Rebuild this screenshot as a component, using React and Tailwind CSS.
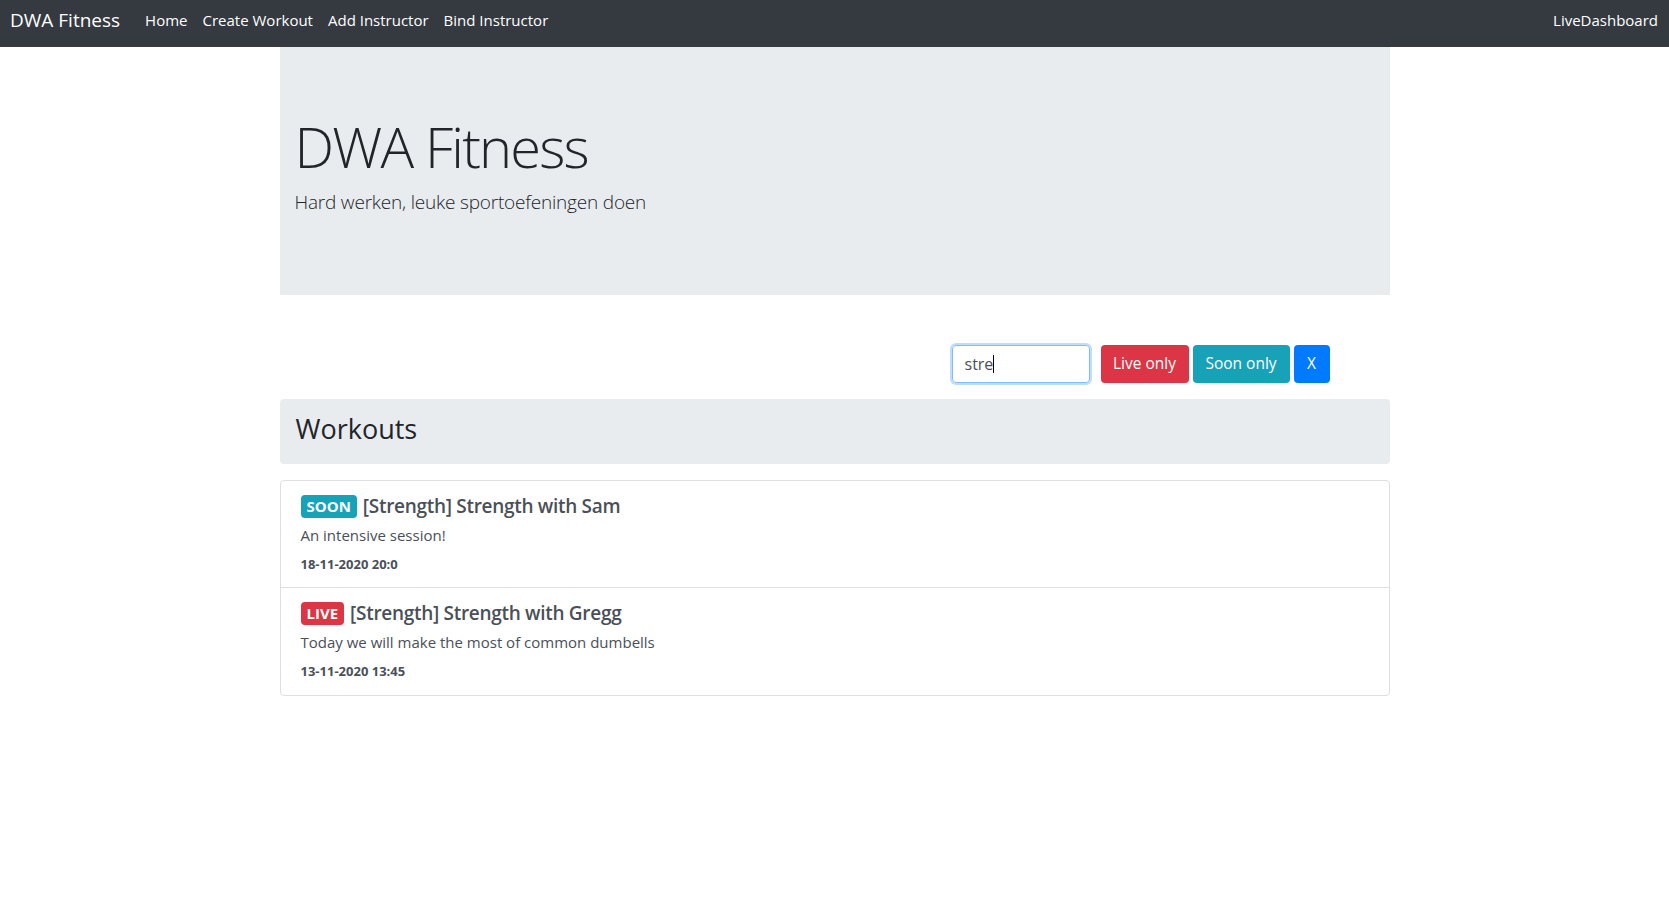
import React from "react";

function Item({ badge, badgeColor, title, desc, date }) {
  return (
    <div className="px-[20px] pt-[14px] pb-[12px] h-[107px] border-b border-[#dfdfdf] last:border-b-0">
      <div className="flex items-center h-[24px] mb-[4px]">
        <span
          className={`${badgeColor} text-white font-bold text-[15px] leading-none px-[6px] py-[4px] rounded-[4px] mr-[6px]`}
        >
          {badge}
        </span>
        <span className="text-[19px] font-semibold tracking-[-0.3px] leading-[1.2] text-[#495057]">{title}</span>
      </div>
      <p className="text-[15px] leading-[24px] text-[#495057] mb-[5px]">{desc}</p>
      <p className="text-[13px] font-bold leading-[24px] text-[#495057]">{date}</p>
    </div>
  );
}

export default function App() {
  return (
    <div className="min-h-screen bg-white font-['Open_Sans',sans-serif] text-[#212529]">
      <nav className="h-[47px] bg-[#343a40] flex items-start pt-[6px] pl-[10px] pr-[11px] text-white">
        <span className="text-[19px] leading-[28px] mr-[25px]">DWA Fitness</span>
        <div className="flex items-center gap-[15px] text-[15px] leading-[28px]">
          <span>Home</span>
          <span>Create Workout</span>
          <span>Add Instructor</span>
          <span>Bind Instructor</span>
        </div>
        <span className="ml-auto text-[15px] leading-[28px]">LiveDashboard</span>
      </nav>

      <div className="w-[1110px] mx-auto">
        <div className="bg-[#e9ecef] pt-[66px] pb-[62px] px-[15px]">
          <h1 className="text-[56px] font-light tracking-[-1.8px] leading-[1.2] mb-[8px] text-[#212529]">
            DWA Fitness
          </h1>
          <p className="text-[19px] font-light tracking-[-0.2px] leading-[1.5] mb-[16px] text-[#212529]">
            Hard werken, leuke sportoefeningen doen
          </p>
        </div>

        <div className="mt-[50px] flex justify-end items-center pr-[60px] h-[38px]">
          <div className="w-[138px] h-[38px] border border-[#80bdff] rounded-[4px] shadow-[0_0_0_2px_rgba(0,123,255,0.25)] flex items-center px-[12px] text-[16px] text-[#495057] mr-[11px]">
            <span>stre</span>
            <span className="inline-block w-[1px] h-[18px] bg-black"></span>
          </div>
          <button className="h-[38px] w-[88px] bg-[#dc3545] text-white text-[15.5px] rounded-[4px] mr-[4px]">
            Live only
          </button>
          <button className="h-[38px] w-[97px] bg-[#17a2b8] text-white text-[15.5px] rounded-[4px] mr-[4px]">
            Soon only
          </button>
          <button className="h-[38px] w-[36px] bg-[#007bff] text-white text-[15.5px] rounded-[4px]">X</button>
        </div>

        <div className="mt-[16px] h-[65px] bg-[#e9ecef] rounded-[4px] px-[16px] pt-[14px]">
          <h3 className="text-[27px] font-normal leading-[1.2] text-[#212529]">Workouts</h3>
        </div>

        <div className="mt-[16px] border border-[#dfdfdf] rounded-[4px]">
          <Item
            badge="SOON"
            badgeColor="bg-[#17a2b8]"
            title="[Strength] Strength with Sam"
            desc="An intensive session!"
            date="18-11-2020 20:0"
          />
          <Item
            badge="LIVE"
            badgeColor="bg-[#dc3545]"
            title="[Strength] Strength with Gregg"
            desc="Today we will make the most of common dumbells"
            date="13-11-2020 13:45"
          />
        </div>
      </div>
    </div>
  );
}
